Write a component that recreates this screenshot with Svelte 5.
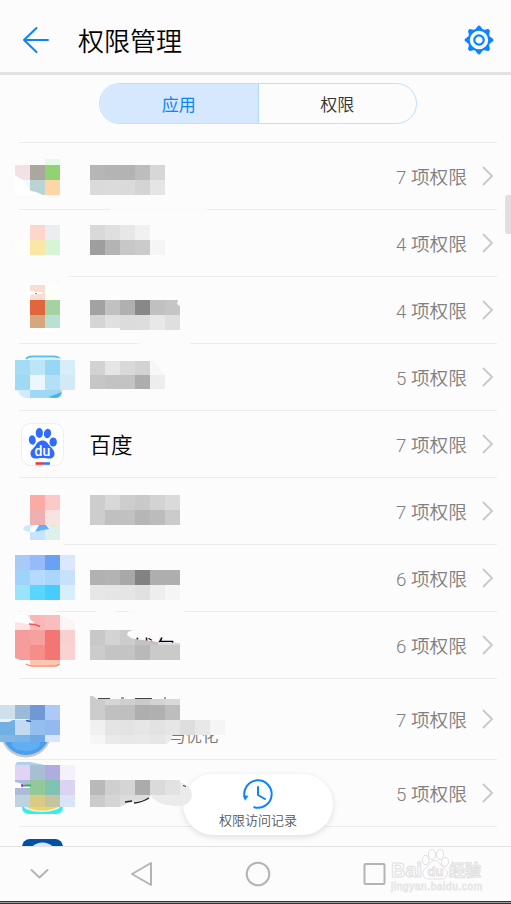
<script lang="ts">
	// a strip is a run of 15px tiles: [x, y, height, colours]
	type Strip = [number, number, number, string[]];
	type Row = {
		top: number;
		height: number;
		count?: number;
		name?: string;
		kind?: string;
		gaps?: [number, number][];
		strips: Strip[];
	};

	const TILE = 15;

	const rows: Row[] = [
		{
			top: 142,
			height: 67,
			count: 7,
			kind: 'corner',
			strips: [
				[45, 159, 6, ['#e7f9ea']],
				[15, 165, 15, ['#f2e1e5', '#aaa79f', '#91d275']],
				[15, 180, 15, ['#eff8ff', '#bad3d5', '#ffd6a8']],
				[90, 165, 15, ['#b6b6b6', '#b4b4b4', '#b3b3b3', '#bdbdbd', '#d7d7d7']],
				[90, 180, 15, ['#dadada', '#dbdbdb', '#dadada', '#d4d4d4', '#e5e5e5']]
			]
		},
		{
			top: 209,
			height: 67,
			count: 4,
			gaps: [[110, 207]],
			strips: [
				[15, 225, 15, ['#fefcfa', '#fed6cb', '#ebedf0']],
				[15, 240, 15, ['#fffffa', '#fae7a5', '#d5f6d5']],
				[90, 225, 15, ['#d9d9d9', '#dfdfdf', '#e7e7e7', '#f1f1f1']],
				[90, 240, 15, ['#9e9e9e', '#b4b4b4', '#c7c7c7', '#cbcbcb', '#f5f5f5']]
			]
		},
		{
			top: 276,
			height: 67,
			count: 4,
			kind: 'smudge',
			gaps: [[19, 69]],
			strips: [
				[30, 285, 15, ['#f9ddd0', '#fdfff8']],
				[30, 300, 15, ['#e1663e', '#a5d2a0']],
				[30, 315, 13, ['#d6a77c', '#bae0d5']],
				[90, 300, 15, ['#a2a2a2', '#c1c1c1', '#b0b0b0', '#888888', '#c0c0c0', '#c5c5c5']],
				[90, 315, 13, ['#d5d5d5', '#e0e0e0']],
				[120, 315, 15, ['#dcdcdc', '#dddddd', '#e8e8e8', '#dfdfdf']]
			]
		},
		{
			top: 343,
			height: 67,
			count: 5,
			kind: 'sky',
			gaps: [[139, 190]],
			strips: [
				[15, 360, 15, ['#a4dcf6', '#bce6f8', '#97d7f5', '#d7eefa']],
				[15, 375, 15, ['#a0d9f4', '#ecf7fd', '#b3e0f7', '#d2eaf8']],
				[90, 361, 14, ['#d2d2d2', '#e5e5e5', '#d9d9d9', '#d3d3d3', '#f7f7f7']],
				[90, 375, 14, ['#c6c6c6', '#c3c3c3', '#c3c3c3', '#adadad', '#ededed']]
			]
		},
		{ top: 410, height: 67, count: 7, name: '百度', kind: 'paw', strips: [] },
		{
			top: 477,
			height: 67,
			count: 7,
			kind: 'petals',
			strips: [
				[30, 495, 15, ['#fbaaa4', '#fccac6']],
				[30, 510, 15, ['#eeb0b1', '#f9e3e2']],
				[30, 525, 15, ['#c7e3ff', '#ddf0ea']],
				[90, 495, 15, ['#cdcdcd', '#d8d8d8', '#cdcdcd', '#c9c9c9', '#d3d3d3', '#dadada']],
				[90, 510, 15, ['#cdcdcd', '#c0c0c0', '#c1c1c1', '#b6b6b6', '#bcbcbc', '#cbcbcb']]
			]
		},
		{
			top: 544,
			height: 67,
			count: 6,
			gaps: [[19, 64]],
			strips: [
				[15, 555, 15, ['#a9c9f8', '#95bbf8', '#69a1f5', '#dbe8fc']],
				[15, 570, 15, ['#9ed4f9', '#b6dafd', '#abd6fc', '#c6e2fa']],
				[15, 585, 15, ['#99e4fa', '#5ad5ff', '#46ccfe', '#d7effc']],
				[90, 570, 15, ['#b1b1b1', '#b3b3b3', '#a8a8a8', '#828282', '#aeaeae', '#aeaeae']],
				[90, 585, 15, ['#e7e7e7', '#e5e5e5', '#e5e5e5', '#e1e1e1', '#eeeeee', '#f5f5f5']]
			]
		},
		{
			top: 611,
			height: 67,
			count: 6,
			kind: 'wallet',
			gaps: [
				[21, 55],
				[96, 115],
				[129, 185]
			],
			strips: [
				[15, 615, 15, ['#fbe4e3', '#f8b8b8', '#f9bdbd']],
				[15, 630, 15, ['#f59c9c', '#f7a0a0', '#f47574', '#f9d0d0']],
				[15, 645, 15, ['#f69d9c', '#f68d88', '#f47672', '#f9d2d1']],
				[30, 660, 5, ['#fdc6b3', '#fdc6b3']]
			]
		},
		{
			top: 678,
			height: 81,
			count: 7,
			kind: 'ball',
			strips: [
				[0, 705, 15, ['#cfdfeb', '#9abbd8', '#7098d3', '#aec9f8']],
				[0, 720, 15, ['#70b0e4', '#c3dbf2', '#93beee', '#94b9f0']],
				[0, 735, 7, ['#82b6e3', '#7ab3e6', '#6fa9e4', '#d7e5f8']],
				[90, 699, 6, ['#cccccc', '#d6d6d6', '#cfcfcf', '#cacaca', '#d3d3d3', '#d9d9d9']],
				[90, 705, 15, ['#cccccc', '#c0c0c0', '#bfbfbf', '#aeaeae', '#b0b0b0', '#bdbdbd']],
				[
					90,
					720,
					15,
					['#f0f0f0', '#e4e4e4', '#e3e3e3', '#e6e6e6', '#e2e2e2', '#e6e6e6', '#dedede', '#e8e8e8', '#f5f5f5']
				],
				[90, 735, 9, ['#f6f6f6', '#eaeaea', '#e8e8e8', '#e9e9e9', '#e6e6e6']]
			]
		},
		{
			top: 759,
			height: 67,
			count: 5,
			kind: 'rainbow',
			strips: [
				[15, 765, 15, ['#e2d2f6', '#a7bfd2', '#b1ace0', '#f5f0fb']],
				[15, 780, 15, ['#aebbd8', '#94c89a', '#7fc3b2', '#dad3f2']],
				[15, 795, 12, ['#bdd3e2', '#dbca83', '#c5c4a0', '#d9e4f6']],
				[90, 780, 15, ['#b9b9b9', '#cfcfcf', '#d5d5d5', '#ababab', '#d9d9d9', '#e2e2e2']],
				[90, 795, 12, ['#cbcbcb', '#d5d5d5']]
			]
		},
		{ top: 826, height: 67, kind: 'globe', strips: [] }
	];
</script>

<div class="screen">
	<div class="status">仅限紧急呼叫</div>

	<header>
		<svg class="back" width="28" height="28" viewBox="0 0 28 28">
			<path d="M15.500 2 3 14l12.500 12M3 14h24" />
		</svg>
		<h1>权限管理</h1>
		<svg class="gear" width="30" height="30" viewBox="-15 -15 30 30">
			<circle r="10.300" />
			<circle r="4.700" />
			{#each [0, 45, 90, 135, 180, 225, 270, 315] as angle}
				<path d="M-2.800-11-.8-13.900H.8L2.800-11Z" transform="rotate({angle})" />
			{/each}
		</svg>
	</header>

	<div class="tabs">
		<button class="tab active">应用</button>
		<button class="tab">权限</button>
	</div>

	<main>
		{#each rows as row}
			<div class="row" class:tall={row.height > 67}>
				<svg class="art" width="250" height={row.height} viewBox="0 {row.top} 250 {row.height}">
					{#each row.gaps ?? [] as [from, to]}
						<rect x={from} y={row.top - 1} width={to - from} height="3" fill="#fbfbfb" />
					{/each}

					{#if row.kind === 'ball'}
						<circle cx="26" cy="732" r="25.500" fill="#c5c7ca" />
						<circle cx="26" cy="731" r="24" fill="#4a9fee" />
						<ellipse cx="26" cy="744" rx="14" ry="7" fill="#60aff3" />
						<rect y="700" width="60" height="18" fill="#fcfcfc" />
						<path d="M98 698.500h12M121 698h3M135 698.500h17M164 698h2" stroke="#444" stroke-width="1" />
						<text class="sub" x="169.500" y="741.500">与优化</text>
						<path d="M90 699v-3l3 0 4 3Z" fill="#ccc" />
						<path d="M165 735h7v2q-1 5-6 7h-1Z" fill="#ebebeb" />
					{:else if row.kind === 'wallet'}
						<text class="name" x="133" y="656">钱包</text>
						<path d="M90 630h15v15H90Z" fill="#c8c8c8" />
						<path d="M105 630h15v15h-15Z" fill="#d3d3d3" />
						<path d="M120 630h13l-5 2-1 3 4 3 4 1v6h-15Z" fill="#ccc" />
						<path d="M135 639l15 2 8 1v3h-23Z" fill="#c2c2c2" />
						<path d="M158 642l22 1v2h-22Z" fill="#d9d9d9" />
						<path d="M90 645h15v15H90Z" fill="#ccc" />
						<path d="M105 645h30v15h-30Z" fill="#c4c4c4" />
						<path d="M135 645h15v15h-15Z" fill="#b9b9b9" />
						<path d="M150 645h30v15h-30Z" fill="#cacaca" />
					{:else if row.kind === 'rainbow'}
						<path d="M22 804h41v3q0 7-7 7H29q-7 0-7-7Z" fill="#32edf2" />
						<ellipse cx="42" cy="804" rx="20" ry="8" fill="#e8f4d5" />
						<ellipse cx="42" cy="804" rx="17" ry="6.500" fill="#f3d35c" />
						<path d="M17 762h13l15 3H15Z" fill="#b0cfe8" />
					{:else if row.kind === 'globe'}
						<rect x="22" y="839" width="41" height="41" rx="8" fill="#0050a5" />
						<circle cx="42.500" cy="858" r="15.500" fill="#dbe6f5" />
					{:else if row.kind === 'sky'}
						<path d="M15 390h15v8h-5l-5-3-2-4Z" fill="#d2ebfa" />
						<path d="M26 359q2-2.500 6-2.500h22q4 0 6 2.500" stroke="#5cc0ee" stroke-width="1.800" fill="none" />
						<path d="M30 358h30v2H30Z" fill="#d5f1fb" />
						<path d="M30 390h32q-1 8-9 8H30Z" fill="#a0d7f4" />
						<path d="M48 397l6-2 8-3q-1 6-7 6Z" fill="#49b2ec" />
					{/if}

					{#each row.strips as [x, y, height, colours]}
						{#each colours as fill, i}
							<rect x={x + i * TILE} {y} width={TILE} {height} {fill} />
						{/each}
					{/each}

					{#if row.kind === 'corner'}
						<path d="M15 175l4 3 5 2 4 7 3 4 5 1 7 3H15Z" fill="#fff" />
						<path d="M23 180h7v9q-3-3-4-6Z" fill="#eff8ff" />
					{:else if row.kind === 'smudge'}
						<path d="M23 300q2-9 7-9h4v3l-4 1v5Z" fill="#fff" />
						<path d="M31 293h11M35 292v3" stroke="#fff" stroke-width="2" />
						<path d="M35 293.500h2" stroke="#d66" />
						<path d="M178 300h2v6l-3-2Z" fill="#fcfcfc" />
						<path d="M30 328h30q-3 4-8 4H36q-5 0-6-4Z" fill="#fff" />
					{:else if row.kind === 'sky'}
						<path d="M154 361h11v14q-3-1-4-5Z" fill="#fcfcfc" />
					{:else if row.kind === 'petals'}
						<path d="M23 528q2-3 7-3h5q-1 5-5 7-6 0-7-4Z" fill="#c4eeff" />
						<path d="M30 532v-4l5-3h12l2 3q-6 2-13 4Z" fill="#fff" />
						<path d="M35 532l4-7h7l3 4q-7 1-14 3Z" fill="#61adff" />
						<path d="M49 525h7q-2 3-4 2Z" fill="#dcf3aa" />
					{:else if row.kind === 'wallet'}
						<path d="M15 615h11l9 9h-7l-13-2Z" fill="#fff" />
						<path d="M29 624l6 .5 5 2" stroke="#ef5656" stroke-width="1.500" fill="none" />
						<path d="M15 658l5 2H15ZM60 615l15 7v8H60Z" fill="#fcf5f4" />
						<path d="M26 664q3 2 6 2h22q4 0 5-2" stroke="#fb8a64" stroke-width="1.500" fill="none" />
					{:else if row.kind === 'ball'}
						<path d="M0 719h30l-2 1H13l-4 2H0Z" fill="#eaf3fa" />
						<path d="M26 720.500l5 1" stroke="#2857bb" stroke-width="1.500" />
					{:else if row.kind === 'rainbow'}
						<path d="M15 782l15 4v2l-15 0Z" fill="#fff" />
						<path d="M22 785.500h9" stroke="#35b15e" stroke-width="2" />
						<path d="M22 784v3" stroke="#92d" stroke-width="1.500" />
						<path d="M120 795h31l-3 4-20 4-8 4Z" fill="#dcdcdc" />
						<path d="M125 802l7-1M134 803q9-1 15-5" stroke="#222" stroke-width="1.500" fill="none" />
					{:else if row.kind === 'paw'}
						<rect x="21.500" y="423.500" width="42" height="42" rx="9" fill="#fff" stroke="#efefef" />
						<g fill="#2f6bff">
							<ellipse cx="32.300" cy="440" rx="3.500" ry="4.700" transform="rotate(-6 32.300 440)" />
							<ellipse cx="39.300" cy="433" rx="3.600" ry="4.900" />
							<ellipse cx="47.500" cy="433.500" rx="3.600" ry="4.700" transform="rotate(12 47.500 433.500)" />
							<ellipse cx="53.200" cy="442" rx="3.700" ry="4.600" />
							<path
								d="M42.500 440.500c3.500 0 5 2.500 7 5s5 4.500 5 8-2 5-5 5c-2.500 0-4-.5-7-.5s-4.500.5-7 .5c-3 0-5-2-5-5 0-3.500 3.500-5.500 5-8s3.500-5 7-5Z"
							/>
						</g>
						<text class="du" x="34.500" y="455.500">du</text>
						<path d="M35.500 463.500h7.500" stroke="#e83a3e" stroke-width="2.600" />
						<path d="M43 463.500h7" stroke="#3a77f7" stroke-width="2.600" />
					{/if}

					{#if row.name}
						<text class="name" x="89.500" y="453">{row.name}</text>
					{/if}
				</svg>

				{#if row.count}
					<span class="count">{row.count} 项权限</span>
					<svg class="chevron" width="12" height="20" viewBox="0 0 12 20">
						<path d="M1.500 1.500 10 10l-8.500 8.500" />
					</svg>
				{/if}
			</div>
		{/each}
	</main>

	<div class="scrollbar"></div>

	<button class="history">
		<svg width="32" height="32" viewBox="-16 -16 32 32">
			<path d="M-13.300 3.500A13.700 13.700 0 1 1-3.800 13.200" />
			<path d="M0-7V1l7 4" />
			<path class="tip" d="M-15 1.500l5.500.3-3.500 5Z" />
		</svg>
		<span>权限访问记录</span>
	</button>

	<svg class="smear" width="42" height="27" viewBox="150 780 42 27">
		<path d="M150 795h15v-15h15q11 4 12 15-1 8-9 11h-10q-16-1-23-11Z" fill="#ebebeb" />
		<path d="M165 780h15v15h-15Z" fill="#e2e2e2" />
		<path d="M150 780h15v15h-15Z" fill="#dadada" />
		<path d="M180 780h5l4 6-9-4Z" fill="#fff" />
		<path d="M183 785.500l3 1" stroke="#333" />
	</svg>

	<nav>
		<svg width="511" height="54" viewBox="0 847 511 54">
			<path d="M31.500 870l8 7.500 8-7.500" />
			<path d="M151 863v22l-19-11Z" />
			<circle cx="258" cy="874" r="11.300" />
			<rect x="364.500" y="864" width="20" height="20" rx="1" />
		</svg>
	</nav>
	<div class="edge"></div>

	<!-- Site mark over the navigation bar -->
	<svg class="mark" width="100" height="48" viewBox="388 846 100 48">
		<text class="big" x="391" y="877">Bai</text>
		<ellipse cx="425.500" cy="860" rx="3.300" ry="4.500" transform="rotate(-10 425.500 860)" />
		<ellipse cx="432" cy="854.500" rx="3.600" ry="5" />
		<ellipse cx="440" cy="854.500" rx="3.600" ry="5" />
		<ellipse cx="445" cy="862" rx="3.400" ry="4.500" transform="rotate(15 445 862)" />
		<path d="M435 860.500c4 0 5 4 8 6.500s5 4 4 8-4 4-12 4-11 0-12-4 1-5.500 4-8 4-6.500 8-6.500Z" />
		<text class="mid" x="427.500" y="876">du</text>
		<text class="cjk" x="449" y="876">经验</text>
		<text class="url" x="391" y="889.500" textLength="91">jingyan.baidu.com</text>
	</svg>
</div>

<style>
	:global(body) {
		margin: 0;
		background: #fcfcfc;
	}

	.screen {
		position: relative;
		display: flex;
		flex-direction: column;
		width: 511px;
		height: 904px;
		overflow: hidden;
		background: #fcfcfc;
		font-family: Roboto, 'Noto Sans CJK SC', sans-serif;
	}

	svg {
		display: block;
		flex: none;
	}

	button {
		margin: 0;
		padding: 0;
		border: none;
		background: none;
		font-family: inherit;
	}

	.status {
		display: flex;
		align-items: flex-end;
		height: 2px;
		padding-left: 6px;
		overflow: hidden;
		font-size: 11px;
		line-height: 12px;
		color: #777;
	}

	header {
		display: flex;
		align-items: center;
		box-sizing: border-box;
		height: 73px;
		padding: 5px 17px 0 21px;
		border-bottom: 3px solid #e1e1e1;
	}

	.back {
		fill: none;
		stroke: #0a84ff;
		stroke-width: 2;
		stroke-linecap: round;
		stroke-linejoin: round;
	}

	h1 {
		flex: 1;
		margin: 4px 0 0 29px;
		font-size: 26px;
		font-weight: 350;
		line-height: 36px;
		color: #000;
	}

	.gear circle {
		fill: none;
		stroke: #0a84ff;
		stroke-width: 2.2;
	}

	.gear path {
		fill: #0a84ff;
		stroke: #0a84ff;
		stroke-linejoin: round;
	}

	.tabs {
		display: flex;
		box-sizing: border-box;
		width: 318px;
		height: 41px;
		margin: 8px 0 18px 99px;
		border: 1px solid #bfdfff;
		border-radius: 21px;
		overflow: hidden;
	}

	.tab {
		flex: 1;
		font-size: 17px;
		font-weight: 350;
		color: #333;
	}

	.tab.active {
		border-right: 1px solid #b5d9fc;
		background: #d6e8fd;
		color: #0a84ff;
		font-weight: 400;
	}

	main {
		flex: 1;
		min-height: 0;
		overflow: hidden;
	}

	.row {
		position: relative;
		display: flex;
		align-items: center;
		height: 67px;
	}

	/* separator starts inside the left margin */
	.row::before {
		content: '';
		position: absolute;
		top: 0;
		left: 19px;
		right: 14px;
		height: 1px;
		background: #ececec;
	}

	.row.tall {
		height: 81px;
	}

	.art {
		position: relative;
		overflow: visible;
	}

	.name {
		font-size: 21.5px;
		font-weight: 350;
		fill: #000;
	}

	.sub {
		font-size: 16.3px;
		font-weight: 350;
		fill: #777;
	}

	.du {
		font-size: 14px;
		font-weight: 500;
		fill: #fff;
	}

	.count {
		flex: 1;
		text-align: right;
		font-size: 18.7px;
		font-weight: 350;
		color: #808080;
	}

	.chevron {
		margin: 1px 17px 0 15px;
		fill: none;
		stroke: #c8c8c8;
		stroke-width: 1.8;
		stroke-linecap: round;
	}

	.scrollbar {
		position: absolute;
		top: 195px;
		right: -2px;
		width: 8px;
		height: 39px;
		border-radius: 3px;
		background: #dfdfdf;
	}

	.history {
		position: absolute;
		top: 774px;
		left: 183px;
		display: flex;
		flex-direction: column;
		align-items: center;
		width: 150px;
		height: 61px;
		padding-top: 4px;
		border-radius: 31px;
		background: #fff;
		box-shadow: 0 2px 6px rgba(0, 0, 0, 0.12);
	}

	.history svg {
		fill: none;
		stroke: #0a84ff;
		stroke-width: 2;
		stroke-linecap: round;
	}

	.history .tip {
		fill: #0a84ff;
		stroke: none;
	}

	.history span {
		margin-top: 1px;
		font-size: 13px;
		font-weight: 350;
		line-height: 19px;
		color: #555;
	}

	.smear {
		position: absolute;
		top: 780px;
		left: 150px;
	}

	nav {
		height: 54px;
		border-top: 1px solid #e3e3e3;
	}

	nav svg {
		fill: none;
		stroke: #b4b4b4;
		stroke-width: 2;
		stroke-linecap: round;
		stroke-linejoin: round;
	}

	.edge {
		box-sizing: border-box;
		height: 3px;
		border-top: 1px solid #2f332f;
		border-bottom: 1px solid #2f332f;
		background: #a0a0a0;
	}

	.mark {
		position: absolute;
		top: 846px;
		left: 388px;
		fill: #fdfdfd;
		stroke: #e0e0e0;
		stroke-width: 1;
	}

	.mark .big {
		font: bold 20px 'Liberation Sans', sans-serif;
	}

	.mark .mid {
		font: bold 13px 'Liberation Sans', sans-serif;
	}

	.mark .cjk {
		font-size: 16px;
		font-weight: 700;
	}

	.mark .url {
		font: 10px 'Liberation Sans', sans-serif;
		stroke: #e6e6e6;
		stroke-width: 0.8;
	}
</style>
